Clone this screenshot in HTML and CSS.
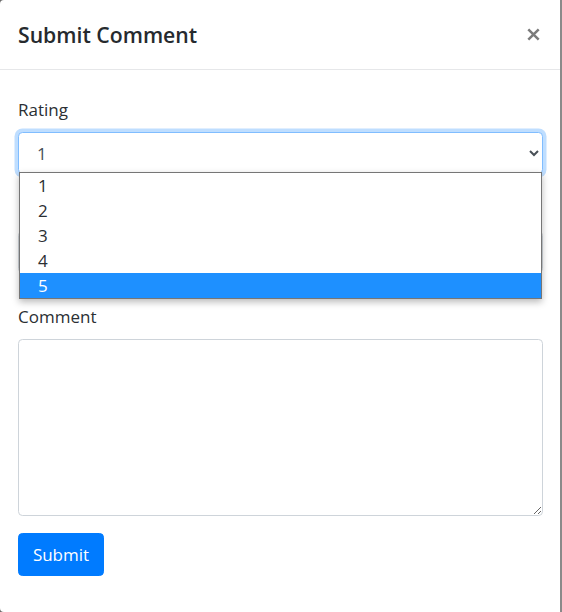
FILE: index.html
```html
<!DOCTYPE html>
<html lang="en">
<head>
<meta charset="utf-8">
<title>Submit Comment</title>
<link rel="stylesheet" href="styles.css">
</head>
<body>
<div class="modal">
  <div class="modal-header">
    <h5 class="modal-title">Submit Comment</h5>
    <button class="close" type="button" aria-label="Close">
      <svg width="13" height="13" viewBox="0 0 13 13" aria-hidden="true"><path d="M1.3 1.3 L11.7 11.7 M11.7 1.3 L1.3 11.7" stroke="#7b7b7b" stroke-width="2.5" fill="none"/></svg>
    </button>
  </div>
  <div class="modal-body">
    <form>
      <div class="form-group rating-group">
        <label for="rating">Rating</label>
        <div class="select-wrap">
          <select id="rating" class="form-control is-focused">
            <option>1</option>
            <option>2</option>
            <option>3</option>
            <option>4</option>
            <option>5</option>
          </select>
          <ul class="select-popup">
            <li>1</li>
            <li>2</li>
            <li>3</li>
            <li>4</li>
            <li class="active">5</li>
          </ul>
        </div>
      </div>
      <div class="form-group name-group">
        <input id="author" class="form-control" type="text" aria-label="Your Name">
      </div>
      <div class="form-group">
        <label for="comment">Comment</label>
        <textarea id="comment" class="form-control comment-box"></textarea>
      </div>
      <button class="btn" type="submit">Submit</button>
    </form>
  </div>
</div>
</body>
</html>
```

FILE: styles.css
```css
* { box-sizing: border-box; }

html, body {
  margin: 0;
  padding: 0;
}

body {
  width: 562px;
  height: 612px;
  background: #6a6a6a;
  font-family: "Open Sans", "Noto Sans", sans-serif;
  font-size: 17px;
  line-height: 26.4px;
  color: #212529;
  overflow: hidden;
}

.modal {
  width: 562px;
  height: 612px;
  background: #fff;
  border-right: 2px solid #8a8a8a;
  border-radius: 4px 0 0 4px;
}

.modal-header {
  display: flex;
  align-items: center;
  justify-content: space-between;
  height: 70px;
  padding: 0 17px 0 18px;
  border-bottom: 1px solid #e6e7e9;
}

.modal-title {
  margin: 0;
  font-size: 21.2px;
  font-weight: 600;
  line-height: 33px;
  color: #262a2e;
}

.close {
  display: flex;
  align-items: center;
  justify-content: center;
  width: 20px;
  height: 20px;
  padding: 0;
  margin: 0;
  border: 0;
  background: transparent;
}

.modal-body {
  padding: 27px 17px 18px 18px;
}

form {
  display: flex;
  flex-direction: column;
  align-items: flex-start;
}

.form-group {
  display: flex;
  flex-direction: column;
  align-self: stretch;
  margin-bottom: 17.6px;
}

.rating-group { margin-bottom: 57.2px; }
.name-group { margin-bottom: 31px; }

label {
  display: block;
  margin-bottom: 8.8px;
  color: #2b2f33;
}

.select-wrap {
  position: relative;
}

.form-control {
  display: block;
  width: 100%;
  height: 41.6px;
  padding: 6.6px 13.2px;
  font: inherit;
  color: #495057;
  background: #fff;
  border: 1px solid #ced4da;
  border-radius: 4.4px;
}

select.form-control {
  padding-left: 14px;
}

.is-focused {
  border-color: #80bdff;
  outline: 0;
  box-shadow: 0 0 0 3.5px rgba(0, 123, 255, 0.25);
}

.select-popup {
  position: absolute;
  top: 40px;
  left: 1px;
  right: 1px;
  margin: 0;
  padding: 0;
  list-style: none;
  background: #fff;
  border: 1px solid #767676;
  box-shadow: 0 3px 7px rgba(0, 0, 0, 0.28);
  z-index: 5;
}

.select-popup li {
  height: 25px;
  line-height: 25px;
  padding-left: 18px;
  color: #2b2f33;
}

.select-popup li.active {
  background: #1e90ff;
  color: #fff;
}

.comment-box {
  height: 177px;
  resize: vertical;
}

.btn {
  width: 86px;
  height: 43px;
  padding: 0;
  font: inherit;
  color: #fff;
  background: #007bff;
  border: 1px solid #007bff;
  border-radius: 4.4px;
  text-align: center;
}
```
